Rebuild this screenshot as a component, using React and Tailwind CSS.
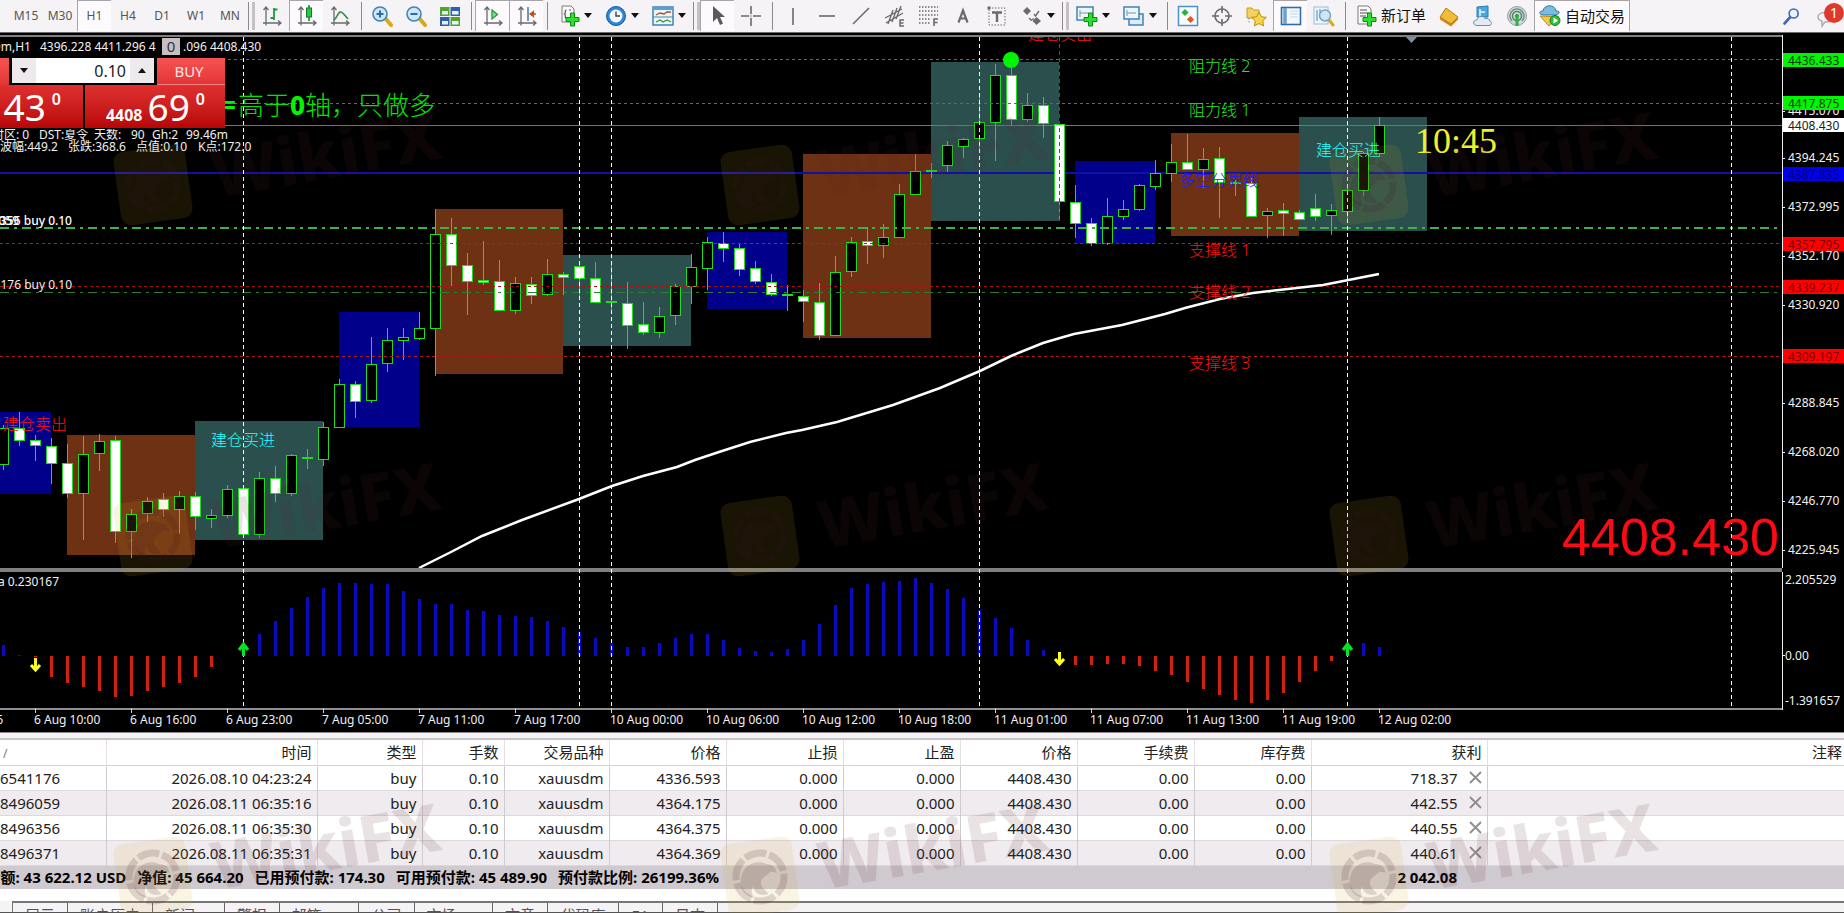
import React from "react";

const FONT = "font-['Noto_Sans','Noto_Sans_CJK_SC',sans-serif]";

/* ---------- chart data: [bodyTop, bodyBottom, wickTop, wickBottom, down] ---------- */
const CANDLES = [
  [428, 464, 425, 470, 0], [428, 440, 412, 446, 1], [440, 445, 435, 461, 1], [446, 463, 438, 484, 1],
  [463, 493, 444, 498, 1], [454, 493, 436, 540, 0], [441, 453, 434, 471, 0], [440, 531, 436, 543, 1],
  [514, 531, 509, 558, 0], [501, 513, 497, 522, 0], [499, 509, 493, 517, 1], [496, 509, 491, 534, 0],
  [496, 516, 492, 530, 1], [515, 518, 509, 528, 0], [489, 515, 485, 518, 0], [488, 534, 487, 538, 1],
  [478, 534, 472, 538, 0], [478, 493, 466, 502, 1], [455, 493, 454, 496, 0], [457, 458, 449, 469, 0],
  [427, 459, 422, 466, 0], [384, 427, 379, 428, 0], [384, 401, 381, 418, 1], [364, 400, 337, 403, 0],
  [340, 363, 328, 372, 0], [337, 340, 328, 360, 0], [328, 338, 312, 340, 0], [234, 328, 209, 376, 0],
  [234, 265, 218, 286, 1], [265, 281, 253, 315, 1], [280, 282, 241, 285, 1], [281, 310, 260, 311, 1],
  [283, 310, 277, 314, 0], [284, 295, 277, 304, 1], [274, 294, 259, 296, 0], [274, 277, 272, 295, 1],
  [266, 278, 262, 300, 1], [278, 302, 262, 303, 1], [301, 302, 265, 312, 0], [303, 325, 282, 349, 1],
  [324, 332, 302, 335, 1], [316, 332, 307, 338, 0], [286, 315, 284, 325, 0], [267, 286, 254, 304, 0],
  [242, 268, 237, 290, 0], [243, 248, 232, 262, 1], [248, 269, 244, 276, 1], [268, 281, 261, 284, 1],
  [282, 294, 274, 296, 1], [294, 295, 285, 311, 0], [296, 301, 290, 322, 1], [302, 335, 283, 340, 1],
  [272, 335, 256, 336, 0], [242, 271, 237, 277, 0], [241, 245, 227, 264, 1], [237, 245, 224, 258, 0],
  [194, 237, 184, 238, 0], [171, 194, 154, 195, 0], [170, 171, 163, 178, 0], [145, 165, 141, 172, 0],
  [139, 146, 138, 158, 0], [122, 138, 97, 152, 0], [75, 122, 64, 161, 0], [75, 119, 68, 126, 1],
  [105, 119, 93, 122, 0], [105, 123, 97, 138, 1], [124, 201, 123, 221, 1], [202, 223, 185, 238, 1],
  [223, 243, 218, 246, 1], [216, 243, 198, 245, 0], [209, 216, 200, 220, 0], [185, 209, 184, 211, 0],
  [173, 186, 160, 190, 0], [162, 173, 144, 182, 0], [162, 169, 134, 170, 1], [159, 169, 148, 188, 0],
  [158, 182, 147, 218, 1], [182, 183, 180, 196, 0], [183, 216, 178, 217, 1], [211, 215, 208, 238, 0],
  [210, 213, 203, 236, 1], [212, 219, 210, 220, 1], [208, 216, 194, 221, 1], [210, 215, 204, 235, 0],
  [190, 211, 187, 222, 0], [153, 190, 152, 196, 0], [125, 153, 117, 157, 0],
];

/* ---------- histogram: end of every bar, zero line at 656 ---------- */
const ZERO = 656;
const BARS = [
  645, 655, 657, 677, 683, 687, 691, 697, 696, 691, 687, 683, 677, 667, 657, 651, 634, 621, 608, 597,
  588, 583, 583, 584, 584, 591, 599, 604, 604, 610, 611, 615, 616, 617, 621, 627, 632, 638, 643, 647,
  647, 643, 638, 634, 634, 640, 648, 651, 652, 649, 640, 624, 605, 588, 584, 582, 581, 578, 583, 589,
  598, 610, 618, 628, 640, 650, 656, 665, 665, 664, 664, 666, 671, 675, 682, 689, 695, 700, 703, 700,
  693, 682, 671, 661, 653, 643, 647,
];

const SESSIONS = [
  [0, 412, 51, 82, "#00008b"], [67, 435, 128, 120, "#6e3113"], [195, 421, 128, 119, "#2b4f4c"],
  [339, 312, 80, 115, "#00008b"], [435, 209, 128, 165, "#6e3113"], [563, 255, 128, 91, "#2b4f4c"],
  [707, 232, 80, 77, "#00008b"], [803, 154, 128, 184, "#6e3113"], [931, 62, 128, 159, "#2b4f4c"],
  [1075, 161, 80, 83, "#00008b"], [1171, 133, 128, 103, "#6e3113"], [1299, 117, 128, 114, "#2b4f4c"],
];

const MA = "419,568 451,552 482,536 522,520 579,499 612,486 643,476 677,467 695,460 719,452 750,442 786,433 802,430 837,422 893,405 940,388 980,371 1011,356 1043,343 1060,338 1074,334 1122,325 1165,314 1185,308 1220,299 1253,293 1323,285 1379,274";

const TIMES = [
  "6 Aug 10:00", "6 Aug 16:00", "6 Aug 23:00", "7 Aug 05:00", "7 Aug 11:00", "7 Aug 17:00",
  "10 Aug 00:00", "10 Aug 06:00", "10 Aug 12:00", "10 Aug 18:00", "11 Aug 01:00", "11 Aug 07:00",
  "11 Aug 13:00", "11 Aug 19:00", "12 Aug 02:00",
];

const cx = (i) => 3.5 + 16 * i;

function HLine({ y, color, dash, w = 1 }) {
  return (
    <line x1="0" x2="100%" y1={w === 1 ? y + 0.5 : y} y2={w === 1 ? y + 0.5 : y} stroke={color} strokeWidth={w} strokeDasharray={dash} />
  );
}

function Chart() {
  return (
    <svg className="block h-[699px] w-full text-xs" role="img" aria-label="XAUUSDm H1">
      <defs>
        <clipPath id="plot">
          <rect x="0" y="37" width="100%" height="672" />
        </clipPath>
      </defs>
      <g transform="translate(0,-33)">
        <rect x="0" y="35" width="100%" height="2" fill="#808080" />
        {SESSIONS.map(([x, y, w, h, c]) => (
          <rect key={x} x={x} y={y} width={w} height={h} fill={c} />
        ))}
        <HLine y={125} color="#6b7780" />
        <HLine y={173} color="#1010a8" w={2} />
        <g>
          {CANDLES.map(([t, b, wt, wb, down], i) => (
            <g key={i}>
              <line x1={cx(i)} x2={cx(i)} y1={wt} y2={wb} stroke="#1fdc1f" />
              <rect x={cx(i) - 5} y={t + 0.5} width="10" height={Math.max(b - t, 1)} stroke="#1fdc1f" fill={down ? "#ffffff" : "#000000"} />
            </g>
          ))}
        </g>
        <HLine y={59} color="#1f9a1f" dash="3 3" />
        <HLine y={103} color="#1f9a1f" dash="3 3" />
        <HLine y={228} color="#3cb34a" dash="9 5 3 5" w={2} />
        <HLine y={243} color="#c01818" dash="3 3" />
        <HLine y={286} color="#a01414" dash="3 3" />
        <HLine y={292} color="#2f7d38" dash="9 5 3 5" />
        <HLine y={356} color="#b01818" dash="3 3" />
        <polyline points={MA} fill="none" stroke="#ffffff" strokeWidth="2.500" />

        {BARS.map((y, i) =>
          Math.abs(y - ZERO) < 2 && i > 2 ? null : (
            <rect key={i} x={cx(i) - 1.5} y={Math.min(y, ZERO)} width="3" height={Math.abs(y - ZERO)} fill={y < ZERO ? "#0a0ac0" : "#d42010"} />
          )
        )}

        <rect x="0" y="568" width="100%" height="4" fill="#808080" />
        <rect x="0" y="708" width="100%" height="2" fill="#909090" />
        {[243.5, 579.5, 611.5, 979.5, 1347.5, 1731.5].map((x) => (
          <line key={x} x1={x} x2={x} y1="37" y2="708" stroke="#ffffff" strokeDasharray="4 3" />
        ))}
        <line x1="1059.5" x2="1059.5" y1="37" y2="221" stroke="#c81e1e" strokeDasharray="4 3" />

        {[[35, 1], [1059, 0]].map(([x, low]) => (
          <path key={x} d={`M${x + 0.5} ${low ? 658 : 652}v12m-4.500 -5l4.500 5l4.500 -5`} fill="none" stroke="#ffff20" strokeWidth="3" />
        ))}
        {[243, 1347].map((x) => (
          <path key={x} d={`M${x + 0.5} 656v-12m-4.500 6l4.500 -6l4.500 6`} fill="none" stroke="#00e61e" strokeWidth="3" />
        ))}
        <circle cx="1011" cy="60" r="8" fill="#00f500" />
        <path d="M1406 37h11l-5.500 6z" fill="#7d8f9c" />

        <g clipPath="url(#plot)" fontSize="16" fontWeight="300">
          <text x="211" y="446" fill="#28ffff">建仓买进</text>
          <text x="1316" y="156" fill="#28ffff">建仓买进</text>
          <text x="3" y="430" fill="#ff1414">建仓卖出</text>
          <text x="1028" y="40" fill="#ff1414">建仓卖出</text>
          <text x="1189" y="72" fill="#28e628">阻力线 2</text>
          <text x="1189" y="116" fill="#28e628">阻力线 1</text>
          <text x="1189" y="256" fill="#ff1010">支撑线 1</text>
          <text x="1189" y="298" fill="#ff1010">支撑线 2</text>
          <text x="1189" y="369" fill="#ff1010">支撑线 3</text>
          <text x="1179" y="186" fill="#1c1cff">多空分界线</text>
        </g>

        <text y="115" fontSize="26" fontWeight="300" fill="#00e600">
          <tspan x="221" fontWeight="700" fill="#00f500">=</tspan>
          <tspan x="238">高于</tspan>
          <tspan fontWeight="800" fill="#00f500">0</tspan>轴，只做多
        </text>
        <text x="1415" y="153" fontSize="36" fill="#f0f028" fontFamily="Liberation Serif, serif">10:45</text>
        <text x="100%" dx="-3" y="555" fontSize="52" textAnchor="end" fill="#ff0a14" fontFamily="Liberation Sans, sans-serif">4408.430</text>

        <g fill="#f0f0f0" fontSize="12">
          <text x="31" y="51" textAnchor="end">XAUUSDm,H1</text>
          <text x="40" y="51">4396.228 4411.296 4</text>
          <text x="183" y="51">.096 4408.430</text>
          <rect x="162" y="38" width="18" height="17" fill="#c4c0c4" />
          <text x="171" y="52" fontSize="15" textAnchor="middle" fill="#333">0</text>
          <text y="139">
            <tspan x="-8">时区: 0</tspan><tspan x="39">DST:夏令</tspan><tspan x="94">天数:</tspan>
            <tspan x="131">90</tspan><tspan x="152">Gh:2</tspan><tspan x="186">99.46m</tspan>
          </text>
          <text y="151">
            <tspan x="0">波幅:449.2</tspan><tspan x="68">张跌:368.6</tspan><tspan x="136">点值:0.10</tspan><tspan x="198">K点:172.0</tspan>
          </text>
          <g textAnchor="end">
            <text x="72" y="225" fill="#ffffff" fontWeight="500">#168496356 buy 0.10</text>
            <text x="19" y="225" fill="#ffffff" fontWeight="500">059</text>
            <text x="72" y="289">#166541176 buy 0.10</text>
          </g>
          <text x="59" y="586" textAnchor="end">a 0.230167</text>
          <text x="3" y="724" textAnchor="end">6 Aug 06</text>
          {TIMES.map((t, k) => (
            <g key={t}>
              <line x1={35.5 + 96 * k} x2={35.5 + 96 * k} y1="708" y2="713" stroke="#d0d0d0" />
              <text x={34 + 96 * k} y="724">{t}</text>
            </g>
          ))}
        </g>
      </g>
    </svg>
  );
}

const AXIS = [
  ["4415.070", 111], ["4394.245", 158], ["4372.995", 207], ["4352.170", 256], ["4330.920", 305],
  ["4288.845", 403], ["4268.020", 452], ["4246.770", 501], ["4225.945", 550],
];
const TAGS = [
  ["4436.433", 60, "#00f500", "#063c06"], ["4417.875", 103, "#00f500", "#063c06"],
  ["4408.430", 125, "#ffffff", "#202020"], ["4387.835", 174, "#0000f0", "#000078"],
  ["4357.795", 244, "#ff0000", "#780000"], ["4339.237", 287, "#ff0000", "#780000"],
  ["4309.197", 356, "#ff0000", "#780000"],
];

function PriceAxis() {
  return (
    <svg className="block h-[699px] w-[62px] shrink-0" role="img" aria-label="Price scale">
      <g transform="translate(0,-33)" fontSize="12" fill="#f0f0f0">
        <rect x="0" y="35" width="1" height="675" fill="#f0f0f0" />
        <rect x="0" y="568" width="1" height="4" fill="#000" />
        {AXIS.map(([t, y]) => (
          <g key={t}>
            <rect x="0" y={y} width="3" height="1" />
            <text x="6" y={y + 4}>{t}</text>
          </g>
        ))}
        {TAGS.map(([t, y, bg, fg]) => (
          <g key={t}>
            <rect x="1" y={y - 7} width="61" height="14" fill={bg} />
            <text x="6" y={y + 5} fill={fg}>{t}</text>
          </g>
        ))}
        <text x="3" y="584">2.205529</text>
        <rect x="0" y="655" width="3" height="1" />
        <text x="3" y="660">0.00</text>
        <text x="3" y="705">-1.391657</text>
      </g>
    </svg>
  );
}

/* ---------- one-click trading panel ---------- */
function TradePanel() {
  return (
    <div className="absolute left-0 top-[25px] w-[225px] bg-black pb-px text-white">
      <div className="flex h-[27px]">
        <button aria-label="Sell" className="w-[9px] bg-linear-to-b from-[#f75252] to-[#e23636]" />
        <div className="mx-[3px] flex h-[25px] flex-1 bg-white">
          <button aria-label="Decrease volume" className="flex w-6 items-center justify-center bg-[#eceaec]">
            <svg width="8" height="5"><path d="M0 0h8l-4 5z" fill="#111" /></svg>
          </button>
          <input aria-label="Volume" defaultValue="0.10" className="w-0 flex-1 bg-white pr-1 text-right text-base text-[#222] outline-none" />
          <button aria-label="Increase volume" className="flex w-6 items-center justify-center bg-[#eceaec]">
            <svg width="8" height="5"><path d="M0 5h8l-4 -5z" fill="#111" /></svg>
          </button>
        </div>
        <button className="w-[68px] border-b border-[#f08080] bg-linear-to-b from-[#f75252] to-[#e23636] pr-1 text-[15px] text-[#ffe4e4]">BUY</button>
      </div>
      <div className="flex h-[43px] gap-[2px]">
        <button className="flex w-[83px] justify-end bg-linear-to-b from-[#e03030] to-[#b80404] pr-[22px] text-[37px] leading-[43px]">
          43<sup className="top-0 self-start pl-[6px] text-base font-semibold leading-[28px]">0</sup>
        </button>
        <button className="flex flex-1 justify-end bg-linear-to-b from-[#e03030] to-[#b80404] pr-[20px] text-[37px] leading-[43px]">
          <span className="pr-[5px] pt-[12px] text-base font-bold leading-[36px]">4408</span>69
          <sup className="top-0 self-start pl-[6px] text-base font-semibold leading-[28px]">0</sup>
        </button>
      </div>
    </div>
  );
}

/* ---------- toolbar ---------- */
function Icon({ children, size = 22 }) {
  return <svg width={size} height={size} viewBox="0 0 22 22" fill="none" className="shrink-0">{children}</svg>;
}
const G = "#6b6b6b";
const Axes = () => <path d="M5 2v16h15M2.500 5L5 2l2.500 3M17 15.500L20 18l-3 2.500M2 18h3v2.500" stroke={G} strokeWidth="1.300" />;
const Plus = ({ x = 8, y = 8 }) => (
  <path transform={`translate(${x} ${y})`} d="M4.500 0h4v4.500h4.500v4h-4.500v4.500h-4v-4.500h-4.500v-4h4.500z" fill="#2ee02e" stroke="#0a8c14" strokeWidth="1" />
);
const Page = () => (
  <>
    <path d="M4 1h9l3 3v13H4z" fill="#fafafa" stroke="#7a7a7a" />
    <path d="M8.500 5c-2.500 0 0 3-2 4c2 1-.5 4 2 4M11 5h2" stroke="#555" strokeWidth="1.200" />
  </>
);
const Lens = ({ sign }) => (
  <>
    <path d="M14 13l6 7" stroke="#d9a820" strokeWidth="4" strokeLinecap="round" />
    <circle cx="9" cy="9" r="7" fill="#cfe6f7" stroke="#3f84b8" strokeWidth="1.600" />
    <path d={sign === "+" ? "M9 5.500v7M5.500 9h7" : "M5.500 9h7"} stroke="#2a6da6" strokeWidth="2" />
  </>
);

const I = {
  bars: <><Axes /><path d="M13 3v12M13 4.500h3.500M9.500 13H13" stroke="#1f9a3a" strokeWidth="1.800" /></>,
  candles: <><Axes /><path d="M13 0v16" stroke="#127a28" strokeWidth="1.500" /><rect x="10.500" y="3" width="5" height="9" fill="#22cc3c" stroke="#127a28" /></>,
  line: <><Axes /><path d="M5 15c4-3 4-9 7-8s4 4 7 7" stroke="#3c8c50" strokeWidth="1.600" /></>,
  zin: <Lens sign="+" />,
  zout: <Lens sign="-" />,
  tile: (
    <>
      <rect x="1" y="2" width="9.500" height="9" fill="#4fa52e" /><rect x="11.500" y="2" width="9.500" height="9" fill="#2f5fb0" />
      <rect x="1" y="12" width="9.500" height="9" fill="#2f5fb0" /><rect x="11.500" y="12" width="9.500" height="9" fill="#4fa52e" />
      <path d="M3 6h6v3.500h-6zM13 6h6.500v3.500H13zM3 16h6v3.500h-6zM13 16h6.500v3.500H13z" fill="#eaf4ff" />
    </>
  ),
  scroll: <><Axes /><path d="M10 5l5.500 4.500l-5.500 4.500z" fill="#7fe08a" stroke="#1f9a3a" strokeWidth="1.300" /></>,
  shift: <><Axes /><path d="M12 2v14" stroke="#3a78b0" strokeWidth="1.500" /><path d="M20 9h-3M17.500 6.500l-3.500 2.500l3.500 2.500z" stroke="#c0501c" fill="#c0501c" strokeWidth="1.300" /></>,
  add: <><Page /><Plus /></>,
  clock: (
    <>
      <circle cx="11" cy="11" r="9.500" fill="#2e86d2" stroke="#165a9c" /><circle cx="11" cy="11" r="6.500" fill="#f2f8fd" />
      <path d="M11 6.500V11h4" stroke="#444" strokeWidth="1.400" />
    </>
  ),
  template: (
    <>
      <rect x="1" y="2" width="20" height="18" fill="#eef6fc" stroke="#3f84b8" strokeWidth="1.500" /><rect x="1" y="2" width="20" height="3" fill="#5aa0d4" />
      <path d="M4 10l4-2l4 1l3-2l4 0" stroke="#a0522d" strokeWidth="1.300" /><path d="M1 12h20" stroke="#3f84b8" />
      <path d="M4 17l4-2l3 2l4-2l4 2" stroke="#2f9a3a" strokeWidth="1.300" />
    </>
  ),
  cursor: <path d="M6 1v16l4-4l3 7l3-1.500l-3-6.500h5z" fill="#5a5a5a" />,
  cross: <path d="M11 1v8M11 13v8M1 11h8M13 11h8M11 10.500v1" stroke={G} strokeWidth="1.600" />,
  vl: <path d="M11 3v17" stroke={G} strokeWidth="1.600" />,
  hl: <path d="M3 11h16" stroke={G} strokeWidth="1.600" />,
  tl: <path d="M3 19L19 3" stroke={G} strokeWidth="1.600" />,
  channel: (
    <>
      <path d="M1 13L18 4M2 18L19 8M4 19L9 5M8 17L13 3M12 14L17 1" stroke={G} strokeWidth="1.400" />
      <path d="M20 15h-4v6h4M16 18h3.500" stroke={G} strokeWidth="1.500" />
    </>
  ),
  fib: (
    <>
      <path d="M1 2h19M1 6h19M1 10h19M1 14h12M1 18h12" stroke={G} strokeWidth="1.300" strokeDasharray="1.500 1.500" />
      <path d="M20 14h-4v7M16 17.500h3.500" stroke={G} strokeWidth="1.600" />
    </>
  ),
  textA: <path d="M6.500 17.500L11 5.500L15.500 17.500M8 13.500h6" stroke={G} strokeWidth="2.200" />,
  label: (
    <>
      <rect x="3" y="3" width="16" height="17" stroke={G} strokeDasharray="1.500 1.500" /><rect x="1.500" y="1.500" width="3" height="3" fill={G} />
      <path d="M6 7.500h10M11 7.500V17" stroke={G} strokeWidth="2.400" />
    </>
  ),
  shapes: (
    <>
      <path d="M6 2l4 4l-4 4l-4-4zM15.500 12l4.500 4l-4.500 4l-4-4z" fill={G} />
      <path d="M8 13l2.500 2.500M10 15.500l3-2M13 9l1.500 2l3.500-5" stroke={G} strokeWidth="1.400" />
    </>
  ),
  newchart: <><rect x="1" y="2" width="16" height="13" fill="#eef6fc" stroke="#3f84b8" strokeWidth="1.500" /><path d="M4 5v7M4 8h9" stroke="#7a94a8" /><Plus /></>,
  profiles: (
    <>
      <rect x="6" y="9" width="14" height="11" fill="#dcecf8" stroke="#3f84b8" strokeWidth="1.500" />
      <rect x="1" y="2" width="15" height="12" fill="#eef6fc" stroke="#3f84b8" strokeWidth="1.500" /><path d="M4 5v6M4 8h9" stroke="#7a94a8" />
    </>
  ),
  market: (
    <>
      <rect x="1.500" y="1.500" width="19" height="19" fill="#f6fbff" stroke="#4a94c8" strokeWidth="1.500" />
      <path d="M8 4l3.500 3.500L8 11L4.500 7.500z" fill="#2fae3a" /><path d="M13.500 11l3.500 3.500L13.500 18L10 14.500z" fill="#e0562a" />
    </>
  ),
  target: (
    <>
      <circle cx="11" cy="11" r="7" stroke={G} strokeWidth="1.600" /><path d="M11 1v7M11 14v7M1 11h7M14 11h7" stroke={G} strokeWidth="1.600" />
    </>
  ),
  fav: (
    <>
      <path d="M2 3h5l1.500 2H14v8H2z" fill="#f2d262" stroke="#c89a1e" /><path d="M4 13v6" stroke="#888" strokeDasharray="1.500 1.500" />
      <path d="M14 7l2.300 4.700l5 .7l-3.600 3.500l.9 5l-4.600-2.400l-4.600 2.400l.9-5l-3.600-3.500l5-.7z" fill="#f7d548" stroke="#c08a14" />
    </>
  ),
  navigator: <><rect x="1.500" y="2.500" width="19" height="17" fill="#f2f8fd" stroke="#2e6ea8" strokeWidth="1.600" /><path d="M5 3v16" stroke="#6ea0cc" strokeWidth="3.500" /><path d="M10 6h8M10 9h8M10 12h8" stroke="#c4d8e8" /></>,
  tester: (
    <>
      <rect x="1" y="2" width="14" height="17" fill="#eef6fc" stroke="#9abcd6" /><path d="M4 5v11M7 4v9" stroke="#7ab0d4" strokeWidth="1.500" />
      <path d="M16 15l4 5" stroke="#d9a820" strokeWidth="3" strokeLinecap="round" /><circle cx="12" cy="10.500" r="5.500" fill="#cfe6f7" stroke="#7aa4c4" strokeWidth="1.500" />
    </>
  ),
  order: <><path d="M3 1h10l3 3v15H3z" fill="#fafafa" stroke="#7a7a7a" /><path d="M5 5h7M5 8h9M5 11h6" stroke="#888" strokeWidth="1.400" /><Plus /></>,
  gold: <><path d="M8 3l12 9l-7 7L2 12z" fill="#f0bc3a" stroke="#b47c10" /><path d="M2 12l11 7v2.500L2 14.500zM13 19l7-7v2.500l-7 7z" fill="#c88a18" /></>,
  cloud: (
    <>
      <path d="M5 2l11-1v11H5z" fill="#4aa8dc" stroke="#2a78b0" /><path d="M8 4v8M8 7h5" stroke="#e6f4ff" strokeWidth="1.500" />
      <path d="M5 20.500c-5 0-4-6 0-5.500c1-4.500 7-4.500 8-1.500c3-1 5 1 4.500 2.500c3 .5 2.500 4.500-.5 4.500z" fill="#e2ebf5" stroke="#6a8cb0" />
    </>
  ),
  signal: (
    <>
      <circle cx="11" cy="11" r="9.500" fill="#cfd8d6" stroke="#94a2a2" /><path d="M6 16a7 7 0 1 1 10 0" stroke="#7a8e8e" strokeWidth="1.500" />
      <circle cx="11" cy="11" r="4.500" stroke="#4a8a5a" strokeWidth="1.500" /><circle cx="11" cy="11" r="2" fill="#2f9a3a" /><path d="M11 11v10" stroke="#2fae4a" strokeWidth="3" />
    </>
  ),
  auto: (
    <>
      <path d="M1 11l9 10l10-9z" fill="#f0cc4a" stroke="#b48a1c" /><path d="M4 6c1-7 12-7 13 0c5 0 4 3-1 4H5C0 10-1 6 4 6z" fill="#7abce0" stroke="#2e7aa8" />
      <circle cx="16" cy="15.500" r="5" fill="#2fc03a" stroke="#12802a" /><path d="M14.500 12.500l4.500 3l-4.500 3z" fill="#fff" />
    </>
  ),
  search: <><path d="M9 12l-7 8" stroke="#3f68b8" strokeWidth="3.500" strokeLinecap="round" /><circle cx="13" cy="8" r="5.500" fill="#eaf2fc" stroke="#3f68b8" strokeWidth="2" /></>,
};

const pressed = "border-l border-t border-[#a8a4a8] bg-[#fcfafc]";

function Tool({ icon, label, on, drop }) {
  return (
    <button
      aria-label={label}
      className={`flex h-[31px] shrink-0 items-center justify-center ${drop ? "w-[47px] gap-1" : "w-[34px]"} ${on ? pressed : ""}`}
    >
      <Icon>{I[icon]}</Icon>
      {drop && <svg width="8" height="5"><path d="M0 0h8l-4 5z" fill="#111" /></svg>}
    </button>
  );
}
const Sep = () => (
  <div className="flex w-2 shrink-0 justify-center py-[2px]"><div className="w-px bg-[#8c888c]" /></div>
);
const Grip = () => (
  <div className="flex w-2 shrink-0 gap-[3px] py-[2px] pl-px"><div className="w-px bg-[#8c888c]" /><div className="w-[3px] bg-[#c4c0c4]" /></div>
);

function Toolbar() {
  return (
    <header className="flex h-[33px] w-full items-stretch overflow-hidden border-b border-[#6c686c] bg-[#f6f3f6] pl-[9px]">
      {["M15", "M30", "H1", "H4", "D1", "W1", "MN"].map((t) => (
        <button key={t} className={`h-[31px] w-[34px] shrink-0 text-xs text-[#555] ${t === "H1" ? pressed : ""}`}>{t}</button>
      ))}
      <Grip />
      <Tool icon="bars" label="Bar chart" /><Tool icon="candles" label="Candlesticks" on /><Tool icon="line" label="Line chart" />
      <Sep />
      <Tool icon="zin" label="Zoom in" /><Tool icon="zout" label="Zoom out" /><Tool icon="tile" label="Tile windows" />
      <Sep />
      <Tool icon="scroll" label="Auto scroll" on /><Tool icon="shift" label="Chart shift" on />
      <Sep />
      <Tool icon="add" label="Indicators" drop /><Tool icon="clock" label="Periods" drop /><Tool icon="template" label="Templates" drop />
      <Grip />
      <Tool icon="cursor" label="Cursor" on /><Tool icon="cross" label="Crosshair" />
      <Sep />
      <Tool icon="vl" label="Vertical line" /><Tool icon="hl" label="Horizontal line" /><Tool icon="tl" label="Trendline" />
      <Tool icon="channel" label="Channel" /><Tool icon="fib" label="Fibonacci" /><Tool icon="textA" label="Text" />
      <Tool icon="label" label="Text label" /><Tool icon="shapes" label="Arrows" drop />
      <Grip />
      <Tool icon="newchart" label="New chart" drop /><Tool icon="profiles" label="Profiles" drop />
      <Sep />
      <Tool icon="market" label="Market watch" /><Tool icon="target" label="Data window" /><Tool icon="fav" label="Navigator" />
      <Tool icon="navigator" label="Terminal" on /><Tool icon="tester" label="Strategy tester" />
      <Sep />
      <button className="flex h-[31px] shrink-0 items-center gap-1 px-[6px] text-[15px] text-[#111]">
        <Icon>{I.order}</Icon>新订单
      </button>
      <Tool icon="gold" label="MetaEditor" /><Tool icon="cloud" label="Hosting" /><Tool icon="signal" label="Signals" />
      <button className={`flex h-[31px] shrink-0 items-center gap-1 border-r px-1 text-[15px] text-[#111] ${pressed}`}>
        <Icon>{I.auto}</Icon>自动交易
      </button>
      <div className="flex-1" />
      <button aria-label="Search" className="flex w-[34px] shrink-0 items-center justify-center"><Icon size={18}>{I.search}</Icon></button>
      <button aria-label="Notifications" className="w-[35px] shrink-0">
        <svg width="35" height="32">
          <path d="M9 17c0-6 14-6 14 0c0 4-4 5-7 5l-3 4v-5c-2 0-4-2-4-4z" fill="#f4f4f4" stroke="#b0acb0" strokeWidth="1.500" />
          <circle cx="25" cy="13" r="10" fill="#e0382c" />
          <text x="25" y="18" fontSize="14" textAnchor="middle" fill="#fff">1</text>
        </svg>
      </button>
    </header>
  );
}

/* ---------- terminal ---------- */
const HEAD = ["时间", "类型", "手数", "交易品种", "价格", "止损", "止盈", "价格", "手续费", "库存费", "获利", "注释"];
const ROWS = [
  ["6541176", "2026.08.10 04:23:24", "4336.593", "718.37"],
  ["8496059", "2026.08.11 06:35:16", "4364.175", "442.55"],
  ["8496356", "2026.08.11 06:35:30", "4364.375", "440.55"],
  ["8496371", "2026.08.11 06:35:31", "4364.369", "440.61"],
];
const cell = "border-r border-[#cfcbcf] px-[5px] py-0 text-right font-normal";

function Orders() {
  return (
    <table className="w-full table-fixed border-collapse bg-white text-[15px] leading-[22px] text-[#222]">
      <colgroup>
        <col className="w-[106px]" /><col className="w-[211px]" /><col className="w-[105px]" /><col className="w-[82px]" /><col className="w-[105px]" />
        <col className="w-[117px]" /><col className="w-[117px]" /><col className="w-[117px]" /><col className="w-[117px]" /><col className="w-[117px]" />
        <col className="w-[117px]" /><col className="w-[176px]" /><col />
      </colgroup>
      <thead>
        <tr className="h-[25px] border-b border-[#d4d0d4]">
          <th className="border-r border-[#e4e0e4] py-0 pl-[3px] text-left font-normal text-[#777]"><span className="text-xs">/</span></th>
          {HEAD.map((h, i) => (
            <th key={i} className={`py-0 text-right font-normal ${i === 11 ? "pr-[2px]" : "border-r border-[#e4e0e4] pr-[5px]"}`}>{h}</th>
          ))}
        </tr>
      </thead>
      <tbody>
        {ROWS.map(([id, time, open, profit]) => (
          <tr key={id} className="h-[25px] border-b border-[#dcd8dc] even:bg-[#efebee]">
            <td className="border-r border-[#cfcbcf] p-0 text-left">{id}</td>
            {[time, "buy", "0.10", "xauusdm", open, "0.000", "0.000", "4408.430", "0.00", "0.00"].map((v, i) => (
              <td key={i} className={cell}>{v}</td>
            ))}
            <td className={cell}>
              <div className="flex items-center justify-end gap-[11px]">
                {profit}
                <button aria-label={`Close order ${id}`}>
                  <svg width="13" height="13"><path d="M1 1l11 11M12 1L1 12" stroke="#8f8b8f" strokeWidth="1.800" /></svg>
                </button>
              </div>
            </td>
            <td className="p-0" />
          </tr>
        ))}
      </tbody>
      <tfoot>
        <tr className="h-6 bg-[#cfcacf] font-bold text-black">
          <td colSpan={11} className="p-0">
            <div className="flex justify-start">
              <div className="flex w-[719px] justify-end gap-[11px] whitespace-nowrap">
                <span>余额: 43 622.12 USD</span><span>净值: 45 664.20</span><span>已用预付款: 174.30</span>
                <span>可用预付款: 45 489.90</span><span>预付款比例: 26199.36%</span>
              </div>
            </div>
          </td>
          <td className="py-0 pl-0 pr-[30px] text-right">2 042.08</td>
          <td className="p-0" />
        </tr>
      </tfoot>
    </table>
  );
}

const TABS = [
  ["展示", "w-[55px]"], ["账户历史", "w-[85px]"], ["新闻", "w-[72px] pr-[17px]"], ["警报", "w-[55px]"], ["邮箱", "w-[79px] pr-[25px]"],
  ["公司", "w-[56px]"], ["市场", "w-[78px] pr-[24px]"], ["文章", "w-[55px]"], ["代码库", "w-[71px]"], ["EA", "w-[44px]"], ["日志", "w-[55px]"],
];

/* ---------- watermark ---------- */
function Watermark() {
  const spots = [153, 760, 1369].flatMap((x) => [185, 536, 877].map((y) => [x, y]));
  return (
    <svg className="pointer-events-none absolute inset-0 h-full w-full" aria-hidden="true">
      <defs>
        <g id="mark">
          <g transform="rotate(-8)">
            <rect x="-36" y="-37" width="72" height="74" rx="10" fill="#d8a828" fillOpacity=".12" />
            <circle r="24" fill="none" stroke="#3c1428" strokeOpacity=".15" strokeWidth="7" strokeDasharray="22 3" />
            <path d="M-20 6C-20-12-4-20 8-12c6 1 9 5 9 10l-6-2c-4 4-10 4-11 10c0 6 4 8 6 12C-4 20-8 14-8 8c-3 4-3 8 0 12C-14 18-20 14-20 6z" fill="#3c1428" fillOpacity=".15" />
          </g>
          <text transform="translate(63 13) rotate(-10)" fontSize="66" fontWeight="800" fill="#602830" fillOpacity=".13">WikiFX</text>
        </g>
      </defs>
      {spots.map(([x, y]) => <use key={`${x}-${y}`} href="#mark" x={x} y={y} />)}
    </svg>
  );
}

export default function App() {
  return (
    <div className={`relative w-full overflow-hidden bg-[#f6f3f6] ${FONT}`}>
      <Toolbar />
      <main className="relative flex overflow-hidden bg-black">
        <div className="min-w-0 flex-1"><Chart /></div>
        <PriceAxis />
        <TradePanel />
      </main>
      <section className="border-b border-[#555]">
        <div className="h-2 border-b-2 border-t border-b-[#c8c4c8] border-t-[#8c888c]" />
        <Orders />
        <div className="h-3 bg-white" />
        <nav className="ml-3 flex h-[11px] overflow-hidden border-l border-t-2 border-[#777]">
          {TABS.map(([t, w]) => (
            <button key={t} className={`h-6 shrink-0 border-r border-[#666] text-[15px] leading-6 text-[#555] ${w}`}>{t}</button>
          ))}
        </nav>
      </section>
      <Watermark />
    </div>
  );
}
